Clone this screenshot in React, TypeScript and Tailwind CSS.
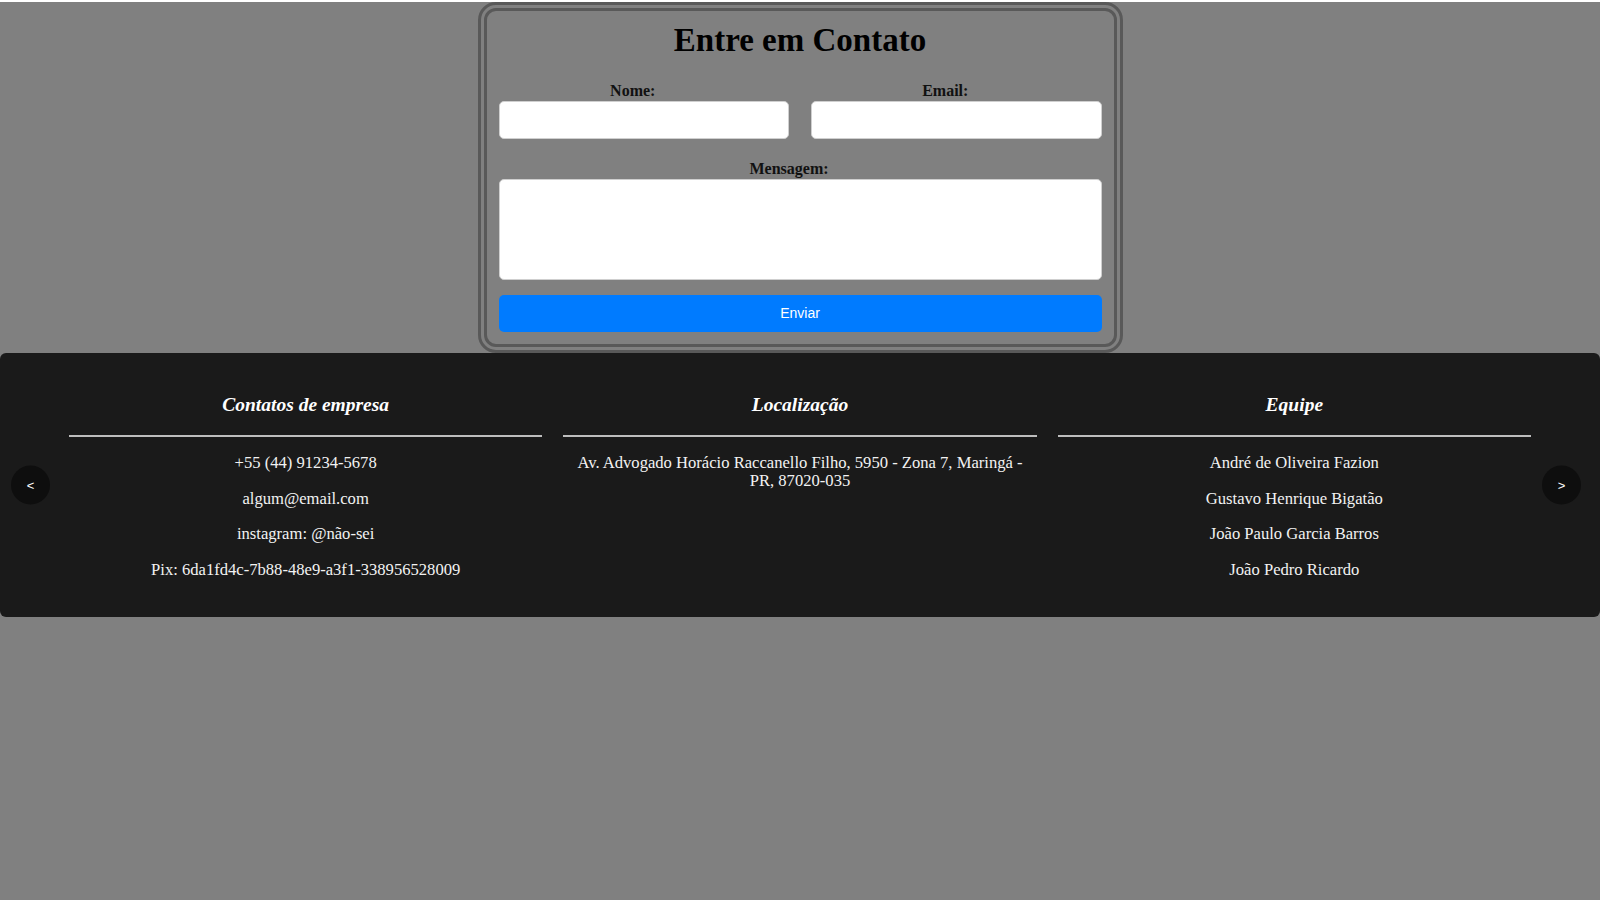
const contatos = [
  "+55 (44) 91234-5678",
  "algum@email.com",
  "instagram: @não-sei",
  "Pix: 6da1fd4c-7b88-48e9-a3f1-338956528009",
];

const equipe = [
  "André de Oliveira Fazion",
  "Gustavo Henrique Bigatão",
  "João Paulo Garcia Barros",
  "João Pedro Ricardo",
];

function FooterColumn({ title, items }: { title: string; items: string[] }) {
  return (
    <div className="flex flex-col items-center text-center">
      <h3 className="text-[19.5px] leading-[23px] font-bold italic text-white">{title}</h3>
      <div className="w-full h-[2px] bg-[#bdbdbd] mt-[19px] mb-[17px]" />
      <ul className="flex flex-col gap-[17.2px] text-[16.6px] leading-[18.4px] text-[#f2f2f2]">
        {items.map((item) => (
          <li key={item}>{item}</li>
        ))}
      </ul>
    </div>
  );
}

export default function App() {
  return (
    <div
      className="w-full min-h-screen bg-[#808080]"
      style={{ fontFamily: '"Liberation Serif", "Times New Roman", serif' }}
    >
      <div className="mx-auto mt-[2px] w-[645px] rounded-[18px] border-[9px] border-double border-[#595959] px-[12px] pt-[11px] pb-[12px]">
        <h1 className="text-center text-[33px] leading-[36px] font-bold text-black">Entre em Contato</h1>

        <form className="mt-[24px]">
          <div className="flex gap-[22px]">
            <div className="flex-1 flex flex-col">
              <label className="pr-[22px] text-center text-[16px] leading-[18px] font-bold text-[#111]">Nome:</label>
              <input
                type="text"
                className="mt-[1px] h-[38px] w-full rounded-[5px] border border-[#cfcfcf] bg-white px-[10px] outline-none"
              />
            </div>
            <div className="flex-1 flex flex-col">
              <label className="pr-[22px] text-center text-[16px] leading-[18px] font-bold text-[#111]">Email:</label>
              <input
                type="email"
                className="mt-[1px] h-[38px] w-full rounded-[5px] border border-[#cfcfcf] bg-white px-[10px] outline-none"
              />
            </div>
          </div>

          <div className="mt-[21px] flex flex-col">
            <label className="pr-[22px] text-center text-[16px] leading-[18px] font-bold text-[#111]">Mensagem:</label>
            <textarea className="mt-[1px] h-[101px] w-full resize-none rounded-[5px] border border-[#cfcfcf] bg-white p-[10px] outline-none" />
          </div>

          <button
            type="button"
            className="mt-[15px] h-[37px] w-full rounded-[5px] bg-[#007bff] text-[14px] text-white"
            style={{ fontFamily: '"Liberation Sans", Arial, sans-serif' }}
          >
            Enviar
          </button>
        </form>
      </div>

      <footer className="relative w-full rounded-[6px] bg-[#1a1a1a] px-[69px] pt-[40px] pb-[38px]">
        <div className="grid grid-cols-3 gap-[21px] items-start">
          <FooterColumn title="Contatos de empresa" items={contatos} />
          <div className="flex flex-col items-center text-center">
            <h3 className="text-[19.5px] leading-[23px] font-bold italic text-white">Localização</h3>
            <div className="w-full h-[2px] bg-[#bdbdbd] mt-[19px] mb-[17px]" />
            <p className="px-[6px] text-[16.6px] leading-[18.4px] text-[#f2f2f2]">
              Av. Advogado Horácio Raccanello Filho, 5950 - Zona 7, Maringá - PR, 87020-035
            </p>
          </div>
          <FooterColumn title="Equipe" items={equipe} />
        </div>

        <button
          type="button"
          className="absolute left-[11px] top-1/2 -translate-y-1/2 w-[39px] h-[39px] rounded-full bg-[#0e0e0e] text-white text-[13px] flex items-center justify-center"
          style={{ fontFamily: '"Liberation Sans", Arial, sans-serif' }}
        >
          &lt;
        </button>
        <button
          type="button"
          className="absolute right-[19px] top-1/2 -translate-y-1/2 w-[39px] h-[39px] rounded-full bg-[#0e0e0e] text-white text-[13px] flex items-center justify-center"
          style={{ fontFamily: '"Liberation Sans", Arial, sans-serif' }}
        >
          &gt;
        </button>
      </footer>
    </div>
  );
}
